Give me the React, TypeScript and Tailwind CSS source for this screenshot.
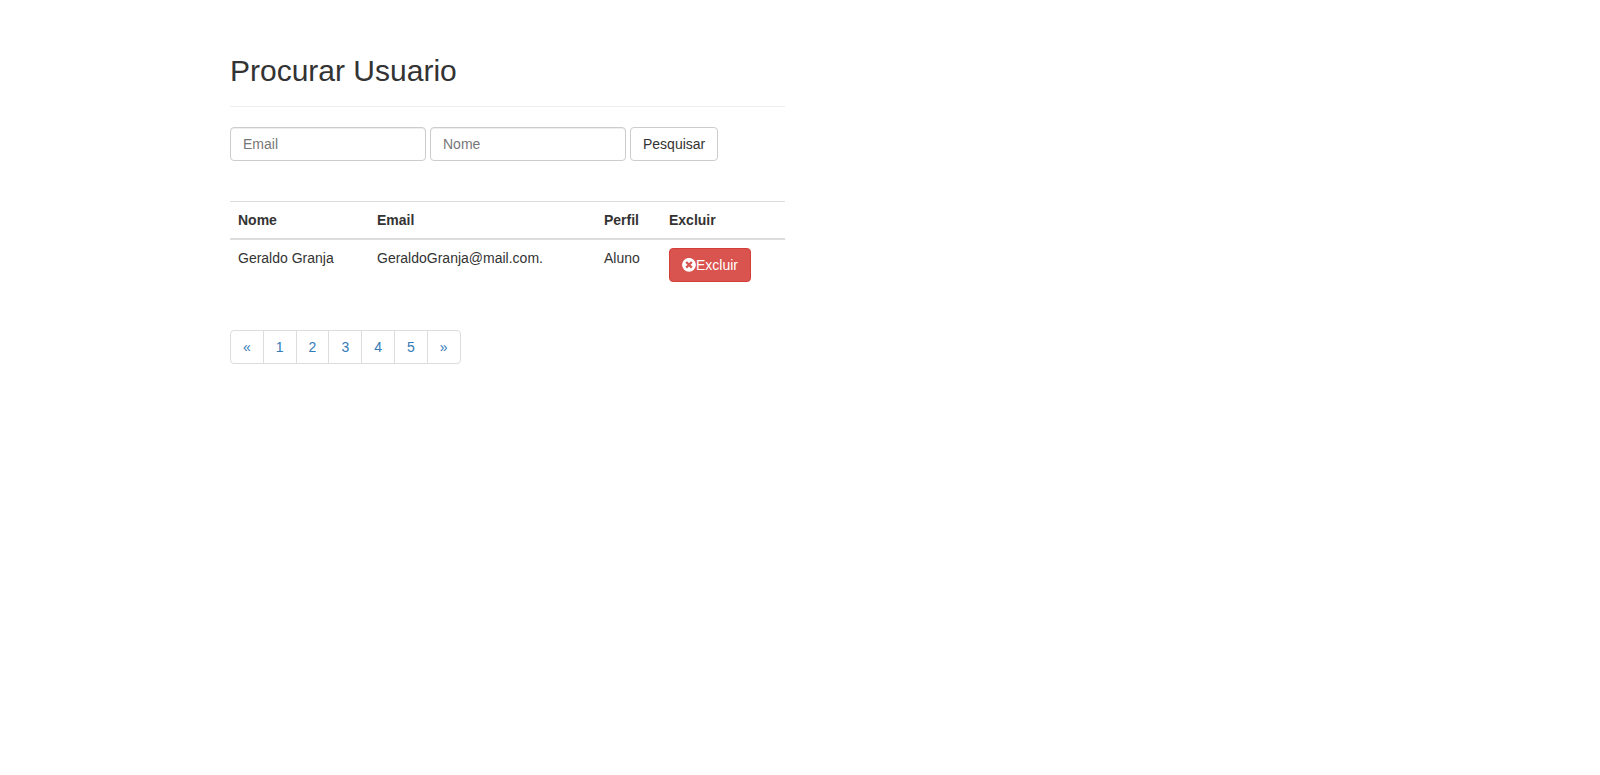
export default function App() {
  const pages = ['«', '1', '2', '3', '4', '5', '»']

  return (
    <div className="min-h-[775px] bg-white pl-[230px] pt-[54px] font-['Liberation_Sans',Arial,sans-serif] text-[14px] leading-[20px] text-[#333]">
      <div className="w-[555px]">
        {/* Page header */}
        <div className="border-b border-[#eee] pb-[19px]">
          <h2 className="text-[30px] leading-[33px] font-normal">Procurar Usuario</h2>
        </div>

        {/* Search form */}
        <form className="mt-[20px] flex gap-[4px]">
          <input
            placeholder="Email"
            className="h-[34px] w-[196px] rounded-[4px] border border-[#ccc] px-[12px] py-[6px] text-[14px] text-[#555] shadow-[inset_0_1px_1px_rgba(0,0,0,0.075)] outline-none placeholder:text-[#777]"
          />
          <input
            placeholder="Nome"
            className="h-[34px] w-[196px] rounded-[4px] border border-[#ccc] px-[12px] py-[6px] text-[14px] text-[#555] shadow-[inset_0_1px_1px_rgba(0,0,0,0.075)] outline-none placeholder:text-[#777]"
          />
          <button type="button" className="h-[34px] rounded-[4px] border border-[#ccc] bg-white px-[12px] py-[6px] text-[14px] text-[#333]">
            Pesquisar
          </button>
        </form>

        {/* Results */}
        <table className="mt-[40px] w-full table-fixed border-collapse">
          <thead>
            <tr className="border-t border-[#ddd]">
              <th className="w-[139px] border-b-2 border-[#ddd] p-[8px] text-left font-bold">Nome</th>
              <th className="w-[227px] border-b-2 border-[#ddd] p-[8px] text-left font-bold">Email</th>
              <th className="w-[65px] border-b-2 border-[#ddd] p-[8px] text-left font-bold">Perfil</th>
              <th className="border-b-2 border-[#ddd] p-[8px] text-left font-bold">Excluir</th>
            </tr>
          </thead>
          <tbody>
            <tr>
              <td className="p-[8px] align-top">Geraldo Granja</td>
              <td className="p-[8px] align-top">GeraldoGranja@mail.com.</td>
              <td className="p-[8px] align-top">Aluno</td>
              <td className="p-[8px] align-top">
                <button type="button" className="flex h-[34px] w-[82px] items-center justify-center rounded-[4px] border border-[#d43f3a] bg-[#d9534f] text-[14px] text-white">
                  <svg viewBox="0 0 14 14" className="h-[14px] w-[14px]">
                    <circle cx="7" cy="6.8" r="6.9" fill="#fff" />
                    <path d="M4.2 4 9.8 9.6M9.8 4 4.2 9.6" stroke="#d9534f" strokeWidth="2.3" />
                  </svg>
                  Excluir
                </button>
              </td>
            </tr>
          </tbody>
        </table>

        {/* Pagination */}
        <ul className="mt-[40px] flex w-fit">
          {pages.map((p) => (
            <li
              key={p}
              className="-ml-px flex h-[34px] items-center border border-[#ddd] bg-white px-[12px] text-[#337ab7] first:ml-0 first:rounded-l-[4px] last:rounded-r-[4px]"
            >
              {p}
            </li>
          ))}
        </ul>
      </div>
    </div>
  )
}
